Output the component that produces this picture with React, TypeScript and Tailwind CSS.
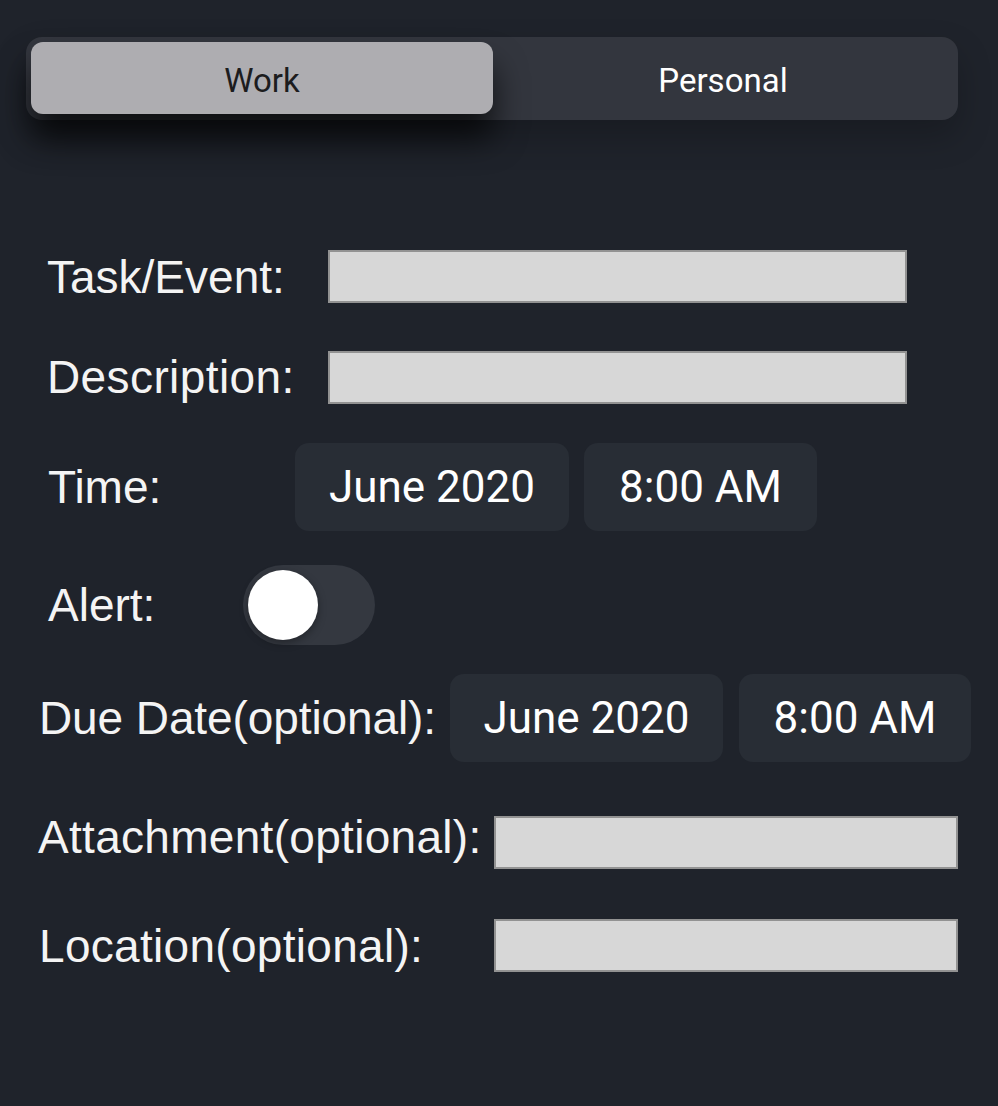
import React, { useState } from 'react';

const labelFont = { fontFamily: '"Liberation Sans", Arial, sans-serif' };
const uiFont = { fontFamily: 'Roboto, "Liberation Sans", sans-serif' };

function Field({ width }: { width: string }) {
  return <div className={`${width} h-[53px] bg-[#d7d7d7] border-2 border-[#929292]`} />;
}

function PickerButton({ text, width }: { text: string; width: string }) {
  return (
    <button
      style={uiFont}
      className={`${width} h-[88px] rounded-[14px] bg-[#282d35] text-white text-[44px] leading-none flex items-center justify-center`}
    >
      {text}
    </button>
  );
}

export default function App() {
  const [tab, setTab] = useState<'work' | 'personal'>('work');
  const [alert, setAlert] = useState(false);

  return (
    <div className="min-h-screen w-full bg-[#1f232b] pt-[37px]">
      {/* segmented control */}
      <div
        style={uiFont}
        className="ml-[26px] w-[932px] h-[83px] rounded-[16px] bg-[#33363e] pt-[5px] pb-[6px] px-[5px] flex shadow-[0_16px_34px_rgba(0,0,0,0.22)]"
      >
        <button
          onClick={() => setTab('work')}
          className={`w-[462px] h-full rounded-[12px] text-[33px] leading-none pt-[4px] ${
            tab === 'work'
              ? 'bg-[#aeadb1] text-[#1c1c1e] shadow-[0_24px_32px_rgba(0,0,0,0.7)]'
              : 'text-white'
          }`}
        >
          Work
        </button>
        <button
          onClick={() => setTab('personal')}
          className={`flex-1 h-full rounded-[12px] text-[33px] leading-none pt-[4px] ${
            tab === 'personal' ? 'bg-[#aeadb1] text-[#1c1c1e]' : 'text-white'
          }`}
        >
          Personal
        </button>
      </div>

      {/* form */}
      <div style={labelFont} className="mt-[130px] flex flex-col text-[46px] leading-none text-[#f4f4f4]">
        <div className="flex items-center h-[53px] pl-[47px]">
          <span className="w-[281px]">Task/Event:</span>
          <Field width="w-[579px]" />
        </div>

        <div className="flex items-center h-[54px] mt-[47px] pl-[47px]">
          <span className="w-[281px] tracking-[0.4px]">Description:</span>
          <Field width="w-[579px]" />
        </div>

        <div className="flex items-center h-[88px] mt-[39px] pl-[48px]">
          <span className="w-[247px]">Time:</span>
          <div className="flex gap-[15px]">
            <PickerButton text="June 2020" width="w-[274px]" />
            <PickerButton text="8:00 AM" width="w-[233px]" />
          </div>
        </div>

        <div className="flex items-center h-[80px] mt-[34px] pl-[48px]">
          <span className="w-[195px]">Alert:</span>
          <button
            onClick={() => setAlert(!alert)}
            className={`relative w-[132px] h-[80px] rounded-full ${alert ? 'bg-[#34c759]' : 'bg-[#343840]'}`}
          >
            <span
              className={`absolute top-[5px] w-[70px] h-[70px] rounded-full bg-white shadow-[0_3px_8px_rgba(0,0,0,0.35)] ${
                alert ? 'left-[57px]' : 'left-[5px]'
              }`}
            />
          </button>
        </div>

        <div className="flex items-center h-[87px] mt-[29px] pl-[39px]">
          <span className="w-[411px] whitespace-nowrap tracking-[-0.1px]">Due Date(optional):</span>
          <div className="flex gap-[16px]">
            <PickerButton text="June 2020" width="w-[273px]" />
            <PickerButton text="8:00 AM" width="w-[232px]" />
          </div>
        </div>

        <div className="flex items-center h-[53px] mt-[55px] pl-[38px]">
          <span className="w-[456px] mb-[12px] tracking-[0.3px]">Attachment(optional):</span>
          <Field width="w-[464px]" />
        </div>

        <div className="flex items-center h-[53px] mt-[50px] pl-[39px]">
          <span className="w-[455px] tracking-[0.3px]">Location(optional):</span>
          <Field width="w-[464px]" />
        </div>
      </div>
    </div>
  );
}
